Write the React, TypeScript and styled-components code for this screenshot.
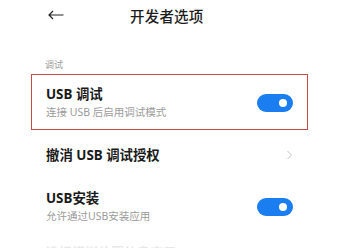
import styled, { createGlobalStyle } from 'styled-components';

const GlobalStyle = createGlobalStyle`
  html, body {
    margin: 0;
    padding: 0;
    background: #ffffff;
    height: 248px;
    overflow: hidden;
  }
  body {
    font-family: "Noto Sans", "Noto Sans CJK SC", sans-serif;
    color: #1a1a1a;
  }
`;

const Page = styled.div`
  width: 341px;
  display: flex;
  flex-direction: column;
`;

const Header = styled.div`
  height: 30px;
  flex-shrink: 0;
  display: flex;
  align-items: center;
  padding-left: 48px;
`;

const BackButton = styled.div`
  width: 16px;
  height: 10px;
  display: flex;
  align-items: center;
`;

const Title = styled.div`
  margin-left: 66px;
  font-size: 14.5px;
  font-weight: 500;
  letter-spacing: 0.2px;
  color: #1c1c1c;
`;

const SectionLabel = styled.div`
  margin: 28px 0 0 45px;
  height: 14px;
  line-height: 14px;
  font-size: 9px;
  color: #9a9a9a;
`;

const Highlight = styled.div`
  margin: 2px 33px 0 31px;
  border: 1px solid #c94a46;
`;

const Row = styled.div<{ $height: number; $inner?: boolean }>`
  flex-shrink: 0;
  height: ${p => p.$height}px;
  display: flex;
  align-items: center;
  justify-content: space-between;
  padding: ${p => (p.$inner ? '0 14px 0 14px' : '0 48px 0 46px')};
`;

const FadedRow = styled.div`
  flex-shrink: 0;
  height: 40px;
  padding: 12px 0 0 46px;
  box-sizing: border-box;
`;

const TextBlock = styled.div`
  display: flex;
  flex-direction: column;
`;

const ItemTitle = styled.div`
  font-size: 13.4px;
  font-weight: 700;
  line-height: 17px;
  color: #1a1a1a;
`;

const ItemSub = styled.div`
  font-size: 10.5px;
  line-height: 14px;
  margin-top: 2px;
  color: #9b9b9b;
`;

const Toggle = styled.div`
  width: 36px;
  height: 18px;
  border-radius: 9px;
  background: #1a7ef1;
  position: relative;
  margin-top: 2px;

  &::after {
    content: '';
    position: absolute;
    right: 6px;
    top: 5px;
    width: 8px;
    height: 8px;
    border-radius: 50%;
    background: #ffffff;
  }
`;

const Faded = styled.div`
  font-size: 13px;
  font-weight: 700;
  line-height: 17px;
  color: #e8e8e8;
`;

const Chevron = () => (
  <svg width="7" height="10" viewBox="0 0 7 10">
    <path d="M1.5 1 L5.5 5 L1.5 9" fill="none" stroke="#c4c4c4" strokeWidth="1" />
  </svg>
);

const BackArrow = () => (
  <svg width="16" height="10" viewBox="0 0 16 10">
    <path d="M15.5 5 H1 M5 1 L1 5 L5 9" fill="none" stroke="#222" strokeWidth="1.2" />
  </svg>
);

export default function App() {
  return (
    <>
      <GlobalStyle />
      <Page>
        <Header>
          <BackButton>
            <BackArrow />
          </BackButton>
          <Title>开发者选项</Title>
        </Header>
        <SectionLabel>调试</SectionLabel>
        <Highlight>
          <Row $height={54} $inner>
            <TextBlock>
              <ItemTitle>USB 调试</ItemTitle>
              <ItemSub>连接 USB 后启用调试模式</ItemSub>
            </TextBlock>
            <Toggle />
          </Row>
        </Highlight>
        <Row $height={50}>
          <ItemTitle>撤消 USB 调试授权</ItemTitle>
          <Chevron />
        </Row>
        <Row $height={52}>
          <TextBlock>
            <ItemTitle>USB安装</ItemTitle>
            <ItemSub>允许通过USB安装应用</ItemSub>
          </TextBlock>
          <Toggle />
        </Row>
        <FadedRow>
          <Faded>选择模拟位置信息应用</Faded>
        </FadedRow>
      </Page>
    </>
  );
}
